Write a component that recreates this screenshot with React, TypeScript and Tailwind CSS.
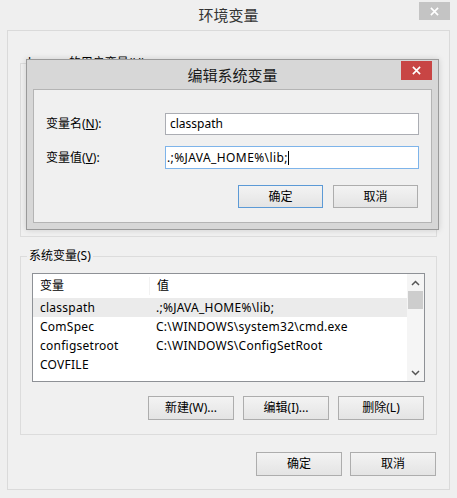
import React from "react";

const FONT = {
  fontFamily: '"Noto Sans", "Noto Sans CJK SC", sans-serif',
};

const ROWS = [
  { name: "classpath", value: ".;%JAVA_HOME%\\lib;", selected: true },
  { name: "ComSpec", value: "C:\\WINDOWS\\system32\\cmd.exe" },
  { name: "configsetroot", value: "C:\\WINDOWS\\ConfigSetRoot" },
  { name: "COVFILE", value: "" },
];

function WinButton({
  children,
  primary,
  className = "",
}: {
  children: React.ReactNode;
  primary?: boolean;
  className?: string;
}) {
  return (
    <button
      className={
        "flex items-center justify-center text-[12px] leading-none text-black bg-gradient-to-b from-[#f3f3f3] to-[#e4e4e4] border " +
        (primary ? "border-[#5c9ad6] " : "border-[#adadad] ") +
        className
      }
    >
      {children}
    </button>
  );
}

function CloseX({ size = 9 }: { size?: number }) {
  return (
    <svg width={size} height={size} viewBox="0 0 10 10">
      <path d="M1 1 L9 9 M9 1 L1 9" stroke="white" strokeWidth="1.8" />
    </svg>
  );
}

function Chevron({ up }: { up?: boolean }) {
  return (
    <svg width="9" height="6" viewBox="0 0 9 6">
      <path
        d={up ? "M1 5 L4.5 1.5 L8 5" : "M1 1 L4.5 4.5 L8 1"}
        stroke="#555"
        strokeWidth="1.5"
        fill="none"
      />
    </svg>
  );
}

function VarList() {
  return (
    <div className="mt-[9px] mx-[11px] h-[109px] border border-[#8e9196] bg-white flex">
      <div className="flex-1 flex flex-col">
        <div className="h-[24px] flex items-center text-[12px]">
          <div className="w-[116px] pl-[7px]">变量</div>
          <div className="pl-[7px] border-l border-[#f2f2f2]">值</div>
        </div>
        {ROWS.map((r) => (
          <div
            key={r.name}
            className={
              "h-[19px] flex items-center text-[12px] tracking-[0.25px] " +
              (r.selected ? "bg-[#ebebeb]" : "")
            }
          >
            <div className="w-[116px] pl-[7px]">{r.name}</div>
            <div className="pl-[7px]">{r.value}</div>
          </div>
        ))}
      </div>
      <div className="w-[17px] bg-[#f5f5f5] flex flex-col items-center">
        <div className="h-[17px] flex items-center justify-center">
          <Chevron up />
        </div>
        <div className="w-[15px] h-[18px] bg-[#cdcdcd]" />
        <div className="flex-1" />
        <div className="h-[17px] flex items-center justify-center">
          <Chevron />
        </div>
      </div>
    </div>
  );
}

function EditDialog() {
  return (
    <div className="absolute left-[26px] top-[59px] w-[413px] h-[171px] border border-[#9a9a9a] bg-[#d7d7d7] flex flex-col shadow-[0_0_6px_rgba(0,0,0,0.15)]">
      <div className="h-[29px] relative flex items-center justify-center">
        <span className="text-[15px] text-[#1a1a1a] mt-[1px]">编辑系统变量</span>
        <div className="absolute right-[6px] top-[1px] w-[31px] h-[19px] bg-[#c84544] flex items-center justify-center">
          <CloseX />
        </div>
      </div>
      <div className="flex-1 mx-[6px] mb-[6px] border border-[#b4b4b4] bg-[#f0f0f0] flex flex-col pl-[12px] pr-[12px] pt-[23px]">
        <div className="flex items-center h-[22px]">
          <div className="w-[119px] text-[12px]">
            变量名(<span className="underline">N</span>):
          </div>
          <div className="w-[254px] h-[22px] border border-[#abadb3] bg-white flex items-center pl-[4px] text-[12px]">
            classpath
          </div>
        </div>
        <div className="flex items-center h-[23px] mt-[11px]">
          <div className="w-[119px] text-[12px]">
            变量值(<span className="underline">V</span>):
          </div>
          <div className="w-[254px] h-[23px] border border-[#7eb4ea] bg-white flex items-center pl-[1px] text-[12px] tracking-[0.4px]">
            .;%JAVA_HOME%\lib;
            <span className="w-px h-[14px] bg-black" />
          </div>
        </div>
        <div className="flex justify-end gap-[10px] mt-[16px] pr-[1px]">
          <WinButton primary className="w-[85px] h-[23px]">
            确定
          </WinButton>
          <WinButton className="w-[85px] h-[23px]">取消</WinButton>
        </div>
      </div>
    </div>
  );
}

export default function App() {
  return (
    <div
      className="w-[457px] h-[498px] bg-[#efefef] relative overflow-hidden flex flex-col px-[7px] pb-[8px] text-black"
      style={FONT}
    >
      <div className="h-[30px] relative flex items-center justify-center">
        <span className="text-[15px] text-[#333]">环境变量</span>
        <div className="absolute right-0 top-[2px] w-[31px] h-[18px] bg-[#c4c4c4] flex items-center justify-center">
          <CloseX />
        </div>
      </div>
      <div className="flex-1 border border-[#dadada] bg-[#f0f0f0] flex flex-col">
        <fieldset className="mt-[24px] mx-[12px] h-[182px] border border-[#dcdcdc]">
          <legend className="ml-[5px] px-[2px] text-[12px] leading-[16px]">
            lenovo 的用户变量(<span className="underline">U</span>)
          </legend>
        </fieldset>
        <fieldset className="mt-[11px] mx-[12px] h-[187px] border border-[#dcdcdc] flex flex-col">
          <legend className="ml-[6px] px-[2px] text-[12px] leading-[16px]">
            系统变量(S)
          </legend>
          <VarList />
          <div className="flex justify-end gap-[9px] mt-[14px] mr-[12px]">
            <WinButton className="w-[86px] h-[24px]">新建(W)...</WinButton>
            <WinButton className="w-[86px] h-[24px]">编辑(I)...</WinButton>
            <WinButton className="w-[86px] h-[24px]">删除(L)</WinButton>
          </div>
        </fieldset>
        <div className="flex justify-end gap-[8px] mt-[17px] mr-[13px]">
          <WinButton className="w-[86px] h-[24px]">确定</WinButton>
          <WinButton className="w-[86px] h-[24px]">取消</WinButton>
        </div>
      </div>
      <EditDialog />
    </div>
  );
}
